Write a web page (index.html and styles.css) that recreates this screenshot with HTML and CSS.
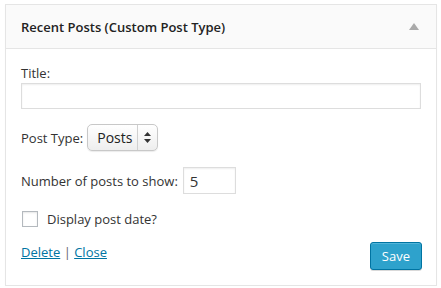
FILE: index.html
```html
<!DOCTYPE html>
<html lang="en">
<head>
    <meta charset="UTF-8">
    <title>Recent Posts (Custom Post Type)</title>
    <link rel="stylesheet" href="styles.css">
</head>
<body>
    <div class="widget">
        <div class="widget-top">
            <div class="widget-title">Recent Posts (Custom Post Type)</div>
            <div class="widget-toggle"></div>
        </div>

        <div class="widget-inside">
            <label class="field-label">Title:</label>
            <input class="text-input wide" type="text">

            <div class="field-row row-type">
                <span>Post Type:</span>
                <div class="fake-select">
                    <span class="select-value">Posts</span>
                    <span class="select-arrows">
                        <svg width="7" height="11" viewBox="0 0 7 11">
                            <path d="M3.5 0 L7 4 L0 4 Z" fill="#333"/>
                            <path d="M3.5 11 L7 7 L0 7 Z" fill="#333"/>
                        </svg>
                    </span>
                </div>
            </div>

            <div class="field-row row-number">
                <span>Number of posts to show:</span>
                <input class="text-input small" type="text" value="5">
            </div>

            <div class="field-row row-check">
                <span class="checkbox"></span>
                <span>Display post date?</span>
            </div>

            <div class="widget-actions">
                <div class="action-links">
                    <a href="#">Delete</a> | <a href="#">Close</a>
                </div>
                <button class="button-primary">Save</button>
            </div>
        </div>
    </div>
</body>
</html>
```

FILE: styles.css
```css
body {
    margin: 0;
    background-color: #ffffff;
    font-family: 'Open Sans', 'Liberation Sans', sans-serif;
    font-size: 13px;
    color: #444444;
}

.widget {
    margin: 4px 0 0 5px;
    width: 430px;
    background-color: #ffffff;
    border: 1px solid #e5e5e5;
    box-shadow: 0 1px 1px rgba(0, 0, 0, 0.04);
}

.widget-top {
    height: 43px;
    background-color: #fafafa;
    border-bottom: 1px solid #e5e5e5;
    display: flex;
    align-items: center;
    justify-content: space-between;
    padding: 0 17px 0 15px;
}

.widget-title {
    font-weight: 600;
    font-size: 13px;
    color: #222222;
}

.widget-toggle {
    width: 0;
    height: 0;
    border-left: 5px solid transparent;
    border-right: 5px solid transparent;
    border-bottom: 7px solid #aaaaaa;
}

.widget-inside {
    padding: 15px 15px 15px 15px;
}

.field-label {
    display: block;
    line-height: 18px;
    color: #333333;
}

.text-input {
    box-sizing: border-box;
    height: 26px;
    border: 1px solid #dddddd;
    box-shadow: inset 0 1px 2px rgba(0, 0, 0, 0.07);
    font-family: inherit;
    font-size: 14px;
    color: #333333;
    padding: 0 8px;
    margin: 0;
    outline: none;
}

.text-input.wide {
    display: block;
    width: 100%;
    margin-top: 1px;
}

.text-input.small {
    width: 53px;
    height: 27px;
    font-size: 15px;
    padding: 0 6px;
}

.field-row {
    display: flex;
    align-items: center;
    gap: 5px;
    color: #333333;
}

.row-type {
    margin-top: 15px;
}

.row-number {
    margin-top: 16px;
}

.row-check {
    margin-top: 16px;
    gap: 9px;
}

.fake-select {
    display: flex;
    align-items: stretch;
    height: 27px;
    box-sizing: border-box;
    border: 1px solid #c8c8c8;
    border-radius: 5px;
    background: linear-gradient(#ffffff, #eeeeee);
    box-shadow: 0 1px 1px rgba(0, 0, 0, 0.08);
    margin-left: -1px;
}

.select-value {
    display: flex;
    align-items: center;
    padding: 0 5px 0 9px;
    font-size: 14px;
    color: #222222;
    border-right: 1px solid #d0d0d0;
}

.select-arrows {
    display: flex;
    align-items: center;
    padding: 0 6px 0 6px;
}

.checkbox {
    width: 16px;
    height: 16px;
    box-sizing: border-box;
    border: 1px solid #b4b9be;
    background-color: #ffffff;
    box-shadow: inset 0 1px 2px rgba(0, 0, 0, 0.1);
    margin-left: 1px;
}

.widget-actions {
    margin-top: 14px;
    display: flex;
    justify-content: space-between;
    align-items: flex-start;
}

.action-links {
    padding-top: 1px;
    color: #666666;
}

.action-links a {
    color: #0074a2;
    text-decoration: underline;
}

.button-primary {
    height: 28px;
    padding: 0 11px;
    background-color: #2ea2cc;
    border: 1px solid #0074a2;
    border-radius: 3px;
    box-shadow: inset 0 1px 0 rgba(120, 200, 230, 0.5), 0 1px 0 rgba(0, 0, 0, 0.15);
    color: #ffffff;
    font-family: inherit;
    font-size: 13px;
    cursor: pointer;
    margin-right: -1px;
}
```
